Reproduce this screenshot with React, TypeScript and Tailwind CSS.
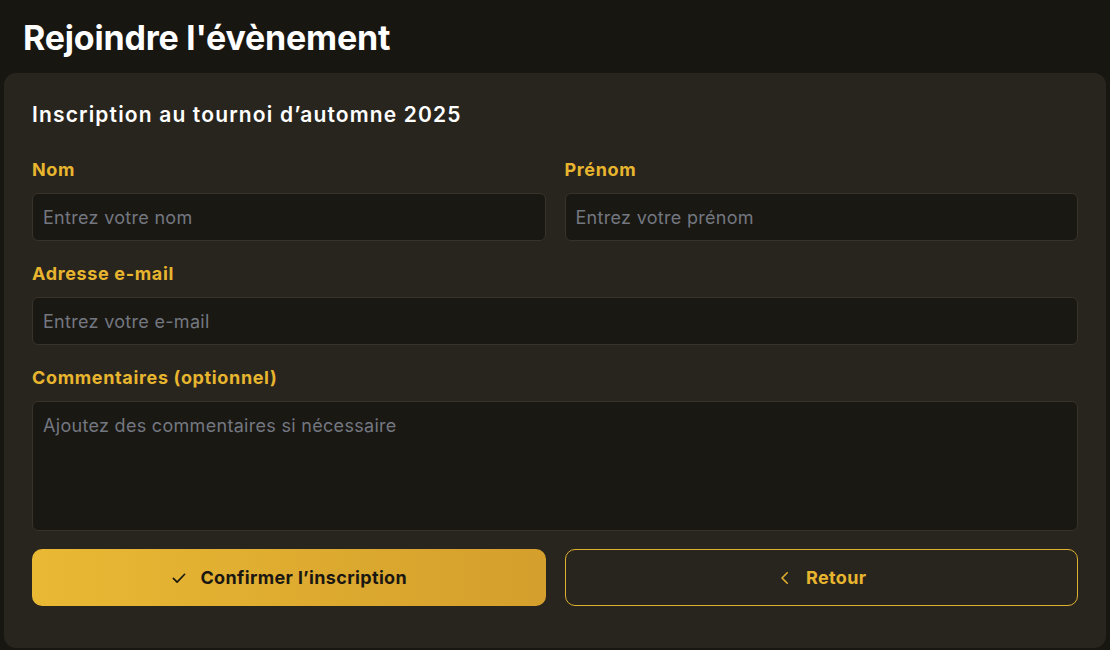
import React from "react";

const font = { fontFamily: "Inter, 'Noto Sans', sans-serif" };

function Label({ children }: { children: React.ReactNode }) {
  return (
    <label className="text-[18px] leading-6 font-bold text-[#e8b52f] tracking-[0.65px] mb-[11px]">{children}</label>
  );
}

function Field({ label, placeholder }: { label: string; placeholder: string }) {
  return (
    <div className="flex flex-col min-w-0">
      <Label>{label}</Label>
      <input
        placeholder={placeholder}
        className="h-12 w-full rounded-md bg-[#1a1813] border border-[#37332a] px-2.5 text-[18px] tracking-[0.3px] text-white placeholder:text-[#737780] outline-none"
      />
    </div>
  );
}

export default function App() {
  return (
    <div style={font} className="w-[1110px] h-[650px] bg-[#181611] overflow-hidden">
      <h1 className="pl-[23px] pt-[17px] pb-[15px] text-[34px] leading-[41px] font-bold text-white tracking-[-0.2px]">
        Rejoindre l'évènement
      </h1>
      <div className="mx-1 rounded-xl bg-[#28251e] px-7 pt-7 pb-[42px]">
        <h2 className="text-[21px] leading-7 font-semibold text-white tracking-[1.15px]">
          Inscription au tournoi d’automne 2025
        </h2>
        <div className="mt-[29px] flex flex-col gap-[21px]">
          <div className="grid grid-cols-2 gap-[19px]">
            <Field label="Nom" placeholder="Entrez votre nom" />
            <Field label="Prénom" placeholder="Entrez votre prénom" />
          </div>
          <Field label="Adresse e-mail" placeholder="Entrez votre e-mail" />
          <div className="flex flex-col">
            <Label>Commentaires (optionnel)</Label>
            <textarea
              placeholder="Ajoutez des commentaires si nécessaire"
              className="h-[130px] w-full resize-none rounded-md bg-[#1a1813] border border-[#37332a] px-2.5 pt-3 text-[18px] leading-6 tracking-[0.3px] text-white placeholder:text-[#737780] outline-none"
            />
          </div>
        </div>
        <div className="mt-[18px] grid grid-cols-2 gap-[19px]">
          <button className="h-[57px] rounded-[10px] bg-gradient-to-r from-[#e9b934] to-[#d49f2c] flex items-center justify-center gap-3 text-[18px] tracking-[0.35px] font-bold text-[#1a1712]">
            <svg width="18" height="18" viewBox="0 0 24 24" fill="none" stroke="currentColor" strokeWidth="2.2" strokeLinecap="round" strokeLinejoin="round">
              <path d="M4.5 12.5l5 5L19.5 7" />
            </svg>
            Confirmer l’inscription
          </button>
          <button className="h-[57px] rounded-[10px] border border-[#e0b030] flex items-center justify-center gap-3 text-[18px] tracking-[0.35px] font-bold text-[#e8b52f]">
            <svg width="18" height="18" viewBox="0 0 24 24" fill="none" stroke="currentColor" strokeWidth="2" strokeLinecap="round" strokeLinejoin="round">
              <path d="M15 5l-7 7 7 7" />
            </svg>
            Retour
          </button>
        </div>
      </div>
    </div>
  );
}
